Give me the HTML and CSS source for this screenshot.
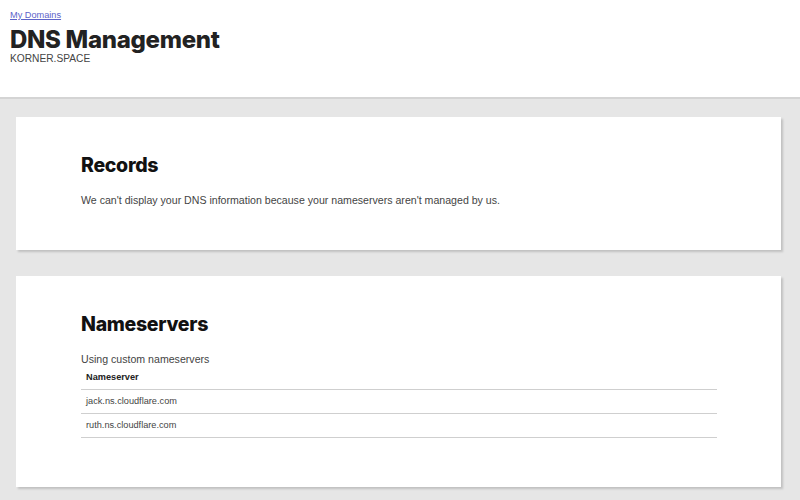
FILE: index.html
```html
<!DOCTYPE html>
<html lang="en">
<head>
<meta charset="utf-8">
<title>DNS Management</title>
<link rel="stylesheet" href="styles.css">
</head>
<body>
<header class="page-header">
  <a class="crumb" href="#">My Domains</a>
  <h1 class="title">DNS Management</h1>
  <div class="domain">KORNER.SPACE</div>
</header>
<main class="content">
  <section class="card card-records">
    <h2 class="card-title">Records</h2>
    <p class="card-text">We can't display your DNS information because your nameservers aren't managed by us.</p>
  </section>
  <section class="card card-ns">
    <h2 class="card-title">Nameservers</h2>
    <p class="card-text">Using custom nameservers</p>
    <table class="ns-table">
      <thead>
        <tr><th>Nameserver</th></tr>
      </thead>
      <tbody>
        <tr><td>jack.ns.cloudflare.com</td></tr>
        <tr><td>ruth.ns.cloudflare.com</td></tr>
      </tbody>
    </table>
  </section>
</main>
</body>
</html>
```

FILE: styles.css
```css
html, body {
  margin: 0;
  padding: 0;
}
body {
  background: #e6e6e6;
  font-family: "Liberation Sans", Arial, sans-serif;
  color: #444;
  min-height: 500px;
}
.page-header {
  background: #fff;
  padding: 9px 10px 0 10px;
  height: 88px;
  border-bottom: 2px solid #d4d4d4;
  display: flex;
  flex-direction: column;
  align-items: flex-start;
}
.crumb {
  font-size: 9.2px;
  line-height: 12px;
  color: #5d63c9;
  text-decoration: underline;
}
.title {
  margin: 7.4px 0 0 0;
  font-family: "Inter", sans-serif;
  font-weight: 800;
  font-size: 24px;
  line-height: 24px;
  letter-spacing: -0.3px;
  color: #222;
}
.domain {
  margin-top: 1px;
  font-size: 10.2px;
  line-height: 12px;
  color: #444;
}
.content {
  padding: 18px 19px 0 16px;
}
.card {
  background: #fff;
  box-shadow: 2px 2px 2px rgba(0, 0, 0, 0.16);
  padding: 36px 64px 43px 65px;
  margin-bottom: 26px;
}
.card-ns {
  padding-bottom: 49px;
}
.card-title {
  margin: 0;
  font-family: "Inter", sans-serif;
  font-weight: 800;
  font-size: 19.5px;
  line-height: 24px;
  letter-spacing: -0.3px;
  color: #111;
}
.card-text {
  margin: 16px 0 0 0;
  font-size: 10.6px;
  line-height: 14px;
  color: #444;
}
.ns-table {
  width: 100%;
  border-collapse: collapse;
  font-size: 9.2px;
  line-height: 11px;
}
.ns-table th,
.ns-table td {
  text-align: left;
  padding: 6px 5px;
  border-bottom: 1px solid #cfcfcf;
}
.ns-table th {
  font-weight: bold;
  color: #222;
}
.ns-table td {
  color: #444;
}
```
